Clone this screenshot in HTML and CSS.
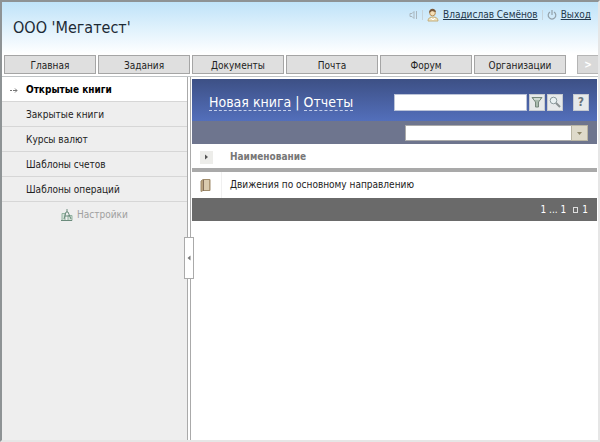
FILE: index.html
```html
<!DOCTYPE html>
<html lang="ru">
<head>
<meta charset="utf-8">
<title>ООО 'Мегатест'</title>
<link rel="stylesheet" href="styles.css">
</head>
<body>
<header class="top">
  <div class="masthead">
    <h1 class="company">ООО 'Мегатест'</h1>
    <div class="account">
      <svg class="sound" viewBox="0 0 10 10" width="10" height="10"><path d="M2 3.500h2l2-2v7l-2-2H2zM8.500 1v8" fill="none" stroke="#a9b6be"/></svg>
      <span class="bar"></span>
      <svg class="person" viewBox="0 0 12 14" width="12" height="14"><path d="M1 13c0-3 2-4 5-4s5 1 5 4z" fill="#efe3c0" stroke="#c4ae7c"/><circle cx="5.500" cy="5" r="2.800" fill="#f6dfb7" stroke="#b88f56"/><path d="M2 5c0-6 7-5 7-1C7 4 6 3 5 3 4 4 3 4 2 5z" fill="#7a5a3c"/><path d="M4 10l2 2 2-2" fill="none" stroke="#fff"/></svg>
      <a href="#">Владислав Семёнов</a>
      <span class="bar"></span>
      <svg class="power" viewBox="0 0 10 10" width="10" height="10"><path d="M3 2a3.800 3.800 0 1 0 4 0M5 0v5" fill="none" stroke="#93a1aa" stroke-width="1.200"/></svg>
      <a href="#">Выход</a>
    </div>
  </div>
  <nav class="tabs">
    <a href="#">Главная</a>
    <a href="#">Задания</a>
    <a href="#">Документы</a>
    <a href="#">Почта</a>
    <a href="#">Форум</a>
    <a href="#">Организации</a>
    <button class="more" aria-label="Ещё">&gt;</button>
  </nav>
</header>
<div class="workspace">
  <aside class="sidebar">
    <nav class="menu">
      <a class="current" href="#"><svg viewBox="0 0 8 7" width="8" height="7"><path d="M0 3.500h2M3 3.500h4M5 1.500l2 2-2 2" fill="none" stroke="#777"/></svg>Открытые книги</a>
      <a href="#">Закрытые книги</a>
      <a href="#">Курсы валют</a>
      <a href="#">Шаблоны счетов</a>
      <a href="#">Шаблоны операций</a>
    </nav>
    <a class="settings" href="#"><svg viewBox="0 0 12 12" width="12" height="12"><path d="M1 4.500h3v7H1zM7 6.500h4v5H7z" fill="#d4e1d8" stroke="#93b3a1"/><path d="M3 10l2-7h2l3 7M4 7h5M6 0v3M0 11.500h11" fill="none" stroke="#6b8b7c"/></svg>Настройки</a>
  </aside>
  <div class="splitter"><button class="collapse" aria-label="Свернуть меню"><svg viewBox="0 0 4 6" width="4" height="6"><path d="M3.500 0.500v5L0.500 3z" fill="#777"/></svg></button></div>
  <main class="content">
    <div class="toolbar">
      <div class="actions"><a href="#">Новая книга</a><span>|</span><a href="#">Отчеты</a></div>
      <form class="search">
        <input type="text" aria-label="Поиск">
        <button type="button" aria-label="Фильтр"><svg viewBox="0 0 12 12" width="12" height="12"><path d="M1 1.500h10L7.500 6v5h-3V6z" fill="#a9bbae" stroke="#76877c"/><path d="M3 3h6" stroke="#f4f7f5"/></svg></button>
        <button type="button" aria-label="Найти"><svg viewBox="0 0 12 12" width="12" height="12"><circle cx="4.500" cy="4.500" r="3.300" fill="#e9f1f2" stroke="#8a999c"/><path d="M7 7l4 4" stroke="#8a9192" stroke-width="2"/></svg></button>
        <button type="button" class="help" aria-label="Справка">?</button>
      </form>
    </div>
    <div class="filterbar">
      <div class="combo">
        <input type="text" aria-label="Представление">
        <button type="button" aria-label="Открыть список"><svg viewBox="0 0 5 3" width="5" height="3"><path d="M0 0h5L2.500 3z" fill="#8d8668"/></svg></button>
      </div>
    </div>
    <table class="books">
      <thead><tr>
        <th class="mark"><button aria-label="Развернуть"><svg viewBox="0 0 4 6" width="4" height="6"><path d="M0 0.500l3 2.500-3 2.500z" fill="#555"/></svg></button></th>
        <th>Наименование</th>
      </tr></thead>
      <tbody><tr>
        <td class="mark"><svg viewBox="0 0 11 13" width="11" height="13"><path d="M1 2l2-1.500h7v11H3L1 12.500z" fill="#b9a27d" stroke="#a08c6c"/><path d="M4 1h5v10H4z" fill="#dacbae"/><path d="M3.500 1v11" stroke="#85705a"/></svg></td>
        <td>Движения по основному направлению</td>
      </tr></tbody>
    </table>
    <footer class="pager"><span>1 ... 1</span><span class="page"><i class="box"></i>1</span></footer>
  </main>
</div>
</body>
</html>
```

FILE: styles.css
```css
* { box-sizing: border-box; }

body {
  margin: 0;
  min-height: 100vh;
  display: flex;
  flex-direction: column;
  border: 2px solid #8e9395;
  border-right-color: #e6e6e6;
  border-bottom-color: #e6e6e6;
  background: #fff;
  color: #222;
  font: 10px/14px "DejaVu Sans Condensed", "Noto Sans", sans-serif;
}

a { color: inherit; text-decoration: none; }
svg { display: block; flex: none; }
button, input { margin: 0; padding: 0; font: inherit; border-radius: 0; }

.top {
  background: linear-gradient(#bfe3f9, #fff 52px);
  border-bottom: 1px solid #c0c4c6;
}

.masthead {
  display: flex;
  justify-content: space-between;
  align-items: flex-start;
  height: 53px;
  padding: 6px 7px 0 11px;
}

.company {
  margin: 8px 0 0;
  font-size: 16px;
  line-height: 24px;
  font-weight: 400;
  color: #1c2a35;
}

.account { display: flex; align-items: center; gap: 4px; }
.account a { color: #24384c; text-decoration: underline; }
.bar { width: 1px; height: 10px; background: #c5d3db; }

.tabs { display: flex; gap: 2px; padding: 0 0 2px 2px; }
.tabs a {
  flex: 0 1 92px;
  height: 19px;
  border: 1px solid #a5a5a5;
  background: #dfdfdf;
  line-height: 19px;
  text-align: center;
}
.more {
  width: 21px;
  height: 19px;
  margin-left: auto;
  border: 1px solid #b5b5b5;
  border-right: 0;
  background: #d9d9d9;
  color: #fff;
  font-weight: 700;
}

.workspace { flex: 1; display: flex; }

.sidebar { width: 185px; flex: none; background: #eee; }
.menu a {
  display: flex;
  align-items: center;
  height: 25px;
  padding: 2px 0 0 24px;
  border-bottom: 1px solid #d6d6d6;
}
.menu .current { padding-left: 8px; gap: 8px; background: #fff; color: #000; font-weight: 700; }
.settings {
  display: flex;
  justify-content: center;
  align-items: center;
  gap: 4px;
  height: 25px;
  color: #a0a0a0;
}

.splitter {
  position: relative;
  width: 4px;
  flex: none;
  border: 1px solid #aaa;
  border-width: 0 1px;
  background: #fff;
}
.collapse {
  position: absolute;
  top: 160px;
  left: -4px;
  display: grid;
  place-items: center;
  width: 10px;
  height: 42px;
  border: 1px solid #aaa;
  background: #fff;
}

.content { flex: 1; min-width: 0; padding: 2px 1px 0; }

.toolbar {
  display: flex;
  justify-content: space-between;
  align-items: center;
  height: 42px;
  padding: 4px 8px 0 17px;
  background: linear-gradient(#3d5085, #536fbb);
}
.actions { display: flex; gap: 4px; color: #fff; font-size: 14px; line-height: 16px; }
.actions a { border-bottom: 1px dashed #c5cfea; }
.search { display: flex; gap: 2px; }
.search input { width: 133px; height: 17px; border: 1px solid #bcc4d8; background: #fff; }
.search button {
  display: grid;
  place-items: center;
  width: 16px;
  height: 17px;
  border: 1px solid #c5c9cf;
  background: #e6e9ea;
}
.search .help { margin-left: 8px; color: #6a757b; font-size: 12px; font-weight: 700; }

.filterbar {
  display: flex;
  justify-content: flex-end;
  height: 23px;
  padding: 4px 9px 0 0;
  background: #6e758e;
}
.combo { display: flex; }
.combo input { width: 166px; height: 16px; border: 1px solid #aaa; border-right: 0; background: #fff; }
.combo button {
  display: grid;
  place-items: center;
  width: 17px;
  height: 16px;
  border: 1px solid #b9b5a3;
  background: #dedaca;
}

.books { width: 100%; border-collapse: separate; border-spacing: 0; }
.books th, .books td { padding: 0 0 0 8px; text-align: left; vertical-align: middle; }
.books th { height: 28px; padding-top: 2px; border-bottom: 4px solid #a9a9a9; color: #777; }
.books td { height: 26px; }
.books .mark { width: 30px; }
.books td.mark { border-right: 1px solid #f0f0f0; }
.mark button {
  display: grid;
  place-items: center;
  width: 13px;
  height: 13px;
  border: 0;
  background: #ededea;
}

.pager {
  display: flex;
  justify-content: flex-end;
  align-items: center;
  gap: 7px;
  height: 23px;
  padding-right: 9px;
  background: #6a6a6a;
  color: #fff;
}
.page { display: flex; align-items: center; gap: 4px; }
.box { width: 5px; height: 6px; border: 1px solid #ddd; }
```
